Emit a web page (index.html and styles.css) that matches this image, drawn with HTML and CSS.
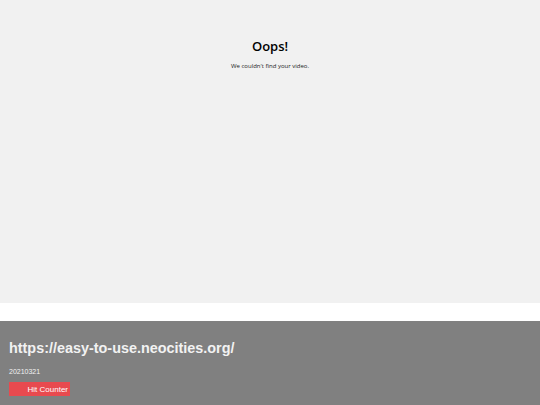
FILE: index.html
```html
<!DOCTYPE html>
<html>
<head>
<meta charset="utf-8">
<link rel="stylesheet" href="styles.css">
</head>
<body>
<div class="player">
  <div class="error">
    <h1 class="title">Oops!</h1>
    <p class="msg">We couldn't find your video.</p>
  </div>
</div>
<div class="gap"></div>
<footer class="footer">
  <h2 class="url">https://easy-to-use.neocities.org/</h2>
  <p class="date">20210321</p>
  <div class="counter"><span class="counter-text">Hit Counter</span></div>
</footer>
</body>
</html>
```
FILE: styles.css
```css
html, body {
  margin: 0;
  padding: 0;
}
body {
  background: #ffffff;
  width: 540px;
  height: 405px;
  overflow: hidden;
}
.player {
  height: 303px;
  background: #f1f1f1;
  display: flex;
  justify-content: center;
}
.error {
  padding-top: 37px;
  text-align: center;
  font-family: "Open Sans", sans-serif;
  color: #000;
}
.title {
  margin: 0;
  font-size: 13px;
  font-weight: 600;
  line-height: 18px;
}
.msg {
  margin: 7px 0 0;
  font-size: 6px;
  line-height: 8px;
  color: #222;
}
.gap {
  height: 18px;
}
.footer {
  background: #808080;
  height: 84px;
  padding: 19px 9px 0;
  box-sizing: border-box;
  font-family: "Liberation Sans", Arial, sans-serif;
  color: #f2f2f2;
}
.url {
  margin: 0;
  font-size: 14.4px;
  font-weight: bold;
  line-height: 17px;
}
.date {
  margin: 10px 0 0;
  font-size: 7px;
  line-height: 9px;
}
.counter {
  margin-top: 6px;
  width: 61px;
  height: 14px;
  background: #e84a4f;
  display: flex;
  align-items: center;
  justify-content: flex-end;
  padding-right: 2px;
  box-sizing: border-box;
}
.counter-text {
  font-size: 8px;
  color: #fff;
}
```
